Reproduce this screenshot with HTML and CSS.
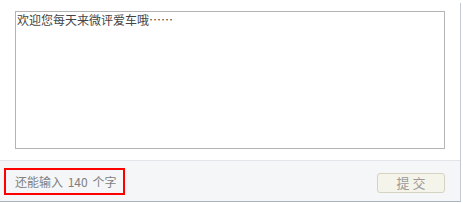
FILE: index.html
```html
<!DOCTYPE html>
<html lang="zh-CN">

<head>
	<meta charset="UTF-8">
	<title>微评</title>
	<link rel="stylesheet" href="styles.css">
</head>

<body>
	<div class="box">
		<!-- 输入区域 -->
		<div class="editor">
			<textarea class="input">欢迎您每天来微评爱车哦……</textarea>
		</div>

		<!-- 底部操作栏 -->
		<div class="bar">
			<div class="count">还能输入 <span class="num">140</span> 个字</div>
			<button class="btn">提 交</button>
		</div>
	</div>
</body>

</html>
```

FILE: styles.css
```css
body {
	margin: 0;
	padding: 0;
	background: #fff;
	font-family: "Noto Sans CJK SC", "Liberation Sans", sans-serif;
}

.box {
	width: 460px;
	margin-top: 3px;
	border-right: 1px solid #c3cad6;
	border-bottom: 1px solid #a9b2bf;
}

.editor {
	padding: 8px 0 11px 15px;
}

.input {
	display: block;
	box-sizing: border-box;
	width: 430px;
	height: 138px;
	margin: 0;
	padding: 0 1px;
	border: 1px solid #b4b4b4;
	resize: none;
	outline: none;
	font-family: "Noto Sans CJK SC", sans-serif;
	font-size: 12px;
	line-height: 16px;
	color: #444;
}

.bar {
	display: flex;
	align-items: center;
	justify-content: space-between;
	height: 40px;
	border-top: 1px solid #e2e5ea;
	background: #f5f6f8;
	padding: 0 15px 0 4px;
}

.count {
	box-sizing: border-box;
	width: 121px;
	height: 27px;
	margin-top: 1px;
	padding: 0 0 0 9px;
	border: 2px solid #f00;
	font-size: 12px;
	line-height: 23px;
	color: #808080;
	white-space: nowrap;
}

.num {
	margin: 0 2px;
}

.btn {
	box-sizing: border-box;
	width: 68px;
	height: 20px;
	margin-top: 3px;
	padding: 0;
	border: 1px solid #d5d3c1;
	border-radius: 3px;
	background: #f5f4ea;
	font-family: "Noto Sans CJK SC", sans-serif;
	font-size: 13px;
	line-height: 18px;
	color: #999;
	cursor: pointer;
}
```
